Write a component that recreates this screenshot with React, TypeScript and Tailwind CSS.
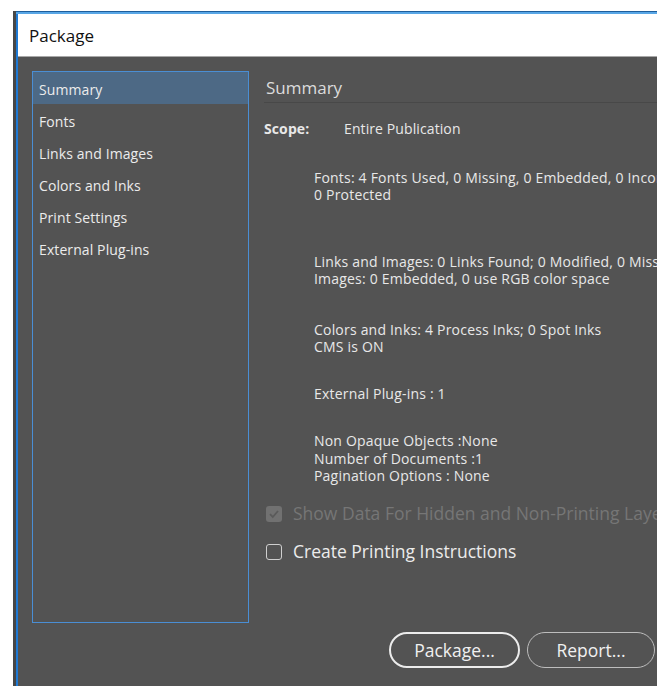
import React, { useState } from "react";

const font = { fontFamily: '"Open Sans", "Noto Sans", sans-serif' };

const sections = [
  "Summary",
  "Fonts",
  "Links and Images",
  "Colors and Inks",
  "Print Settings",
  "External Plug-ins",
];

const SideList: React.FC<{ active: string; onPick: (s: string) => void }> = ({
  active,
  onPick,
}) => (
  <ul className="w-[217px] h-[552px] shrink-0 border border-[#4a8ed4]">
    {sections.map((s) => (
      <li
        key={s}
        onClick={() => onPick(s)}
        className={`h-[32px] flex items-center pl-[6px] pt-[3px] text-[14px] tracking-[0.1px] text-[#ececec] cursor-default ${
          s === active ? "bg-[#4d6985]" : ""
        }`}
      >
        {s}
      </li>
    ))}
  </ul>
);

const Block: React.FC<{ lines: string[]; className?: string }> = ({
  lines,
  className,
}) => (
  <div
    className={`pl-[50px] text-[14px] tracking-[0.2px] leading-[17.5px] text-[#e8e8e8] ${className ?? ""}`}
  >
    {lines.map((l) => (
      <p key={l} className="whitespace-nowrap">
        {l}
      </p>
    ))}
  </div>
);

export default function App() {
  const [active, setActive] = useState("Summary");
  const [instructions, setInstructions] = useState(false);

  return (
    <div className="w-[666px] h-[686px] bg-white pt-[11px] pl-[13px]" style={font}>
      <div className="w-[644px] h-[675px] overflow-hidden flex flex-col bg-[#535353] border-l-[3px] border-[#474747]">
        <div className="h-[1px] bg-[#1e5e9c]" />
        <div className="h-[2px] bg-[#58a6e6]" />
        <div className="flex-1 flex flex-col border-l-[2px] border-[#1f7ad4]">
          {/* title bar */}
          <div className="h-[43px] shrink-0 bg-white border-b border-[#a8a8a8] flex items-center pl-[11px] pt-[2px] text-[17px] text-[#111]">
            Package
          </div>

          <div className="flex-1 flex pl-[14px] pt-[14px] gap-[15px]">
            <SideList active={active} onPick={setActive} />

            <div className="flex-1 flex flex-col min-w-0 pb-[18px]">
              <div className="h-[32px] border-b border-[#484848] flex items-center pl-[2px] pt-[3px] text-[17px] text-[#dcdcdc]">
                Summary
              </div>

              <div className="mt-[17px] flex text-[14px] tracking-[0.1px] leading-[17.5px] text-[#e8e8e8]">
                <span className="w-[80px] font-bold">Scope:</span>
                <span>Entire Publication</span>
              </div>

              <Block
                className="mt-[31px]"
                lines={[
                  "Fonts: 4 Fonts Used, 0 Missing, 0 Embedded, 0 Incomplete",
                  "0 Protected",
                ]}
              />
              <Block
                className="mt-[49px]"
                lines={[
                  "Links and Images: 0 Links Found; 0 Modified, 0 Missing",
                  "Images: 0 Embedded, 0 use RGB color space",
                ]}
              />
              <Block
                className="mt-[33px]"
                lines={["Colors and Inks: 4 Process Inks; 0 Spot Inks", "CMS is ON"]}
              />
              <Block className="mt-[29px]" lines={["External Plug-ins : 1"]} />
              <Block
                className="mt-[30px]"
                lines={[
                  "Non Opaque Objects :None",
                  "Number of Documents :1",
                  "Pagination Options : None",
                ]}
              />

              {/* disabled option */}
              <div className="mt-[19px] h-[20px] flex items-center pl-[2px] gap-[11px] whitespace-nowrap">
                <span className="w-[16px] h-[16px] shrink-0 rounded-[3px] bg-[#717171] flex items-center justify-center">
                  <svg width="12" height="12" viewBox="0 0 12 12">
                    <path d="M2 6.2 L4.8 9 L10 3" fill="none" stroke="#5a5a5a" strokeWidth="1.8" />
                  </svg>
                </span>
                <span className="text-[17.5px] text-[#767676]">
                  Show Data For Hidden and Non-Printing Layers
                </span>
              </div>

              <label className="mt-[18px] h-[20px] flex items-center pl-[2px] gap-[11px] whitespace-nowrap cursor-default">
                <span
                  onClick={() => setInstructions(!instructions)}
                  className="w-[16px] h-[16px] shrink-0 rounded-[3px] border border-[#cfcfcf] flex items-center justify-center"
                >
                  {instructions && (
                    <svg width="12" height="12" viewBox="0 0 12 12">
                      <path d="M2 6.2 L4.8 9 L10 3" fill="none" stroke="#e8e8e8" strokeWidth="1.8" />
                    </svg>
                  )}
                </span>
                <span className="text-[17.5px] text-[#ececec]">Create Printing Instructions</span>
              </label>

              <div className="mt-auto flex justify-end gap-[7px] pr-[2px]">
                <button className="w-[131px] h-[36px] rounded-full border-2 border-[#ececec] text-[17.5px] text-[#f0f0f0]">
                  Package...
                </button>
                <button className="w-[128px] h-[36px] rounded-full border border-[#bdbdbd] text-[17.5px] text-[#f0f0f0]">
                  Report...
                </button>
              </div>
            </div>
          </div>
        </div>
      </div>
    </div>
  );
}
